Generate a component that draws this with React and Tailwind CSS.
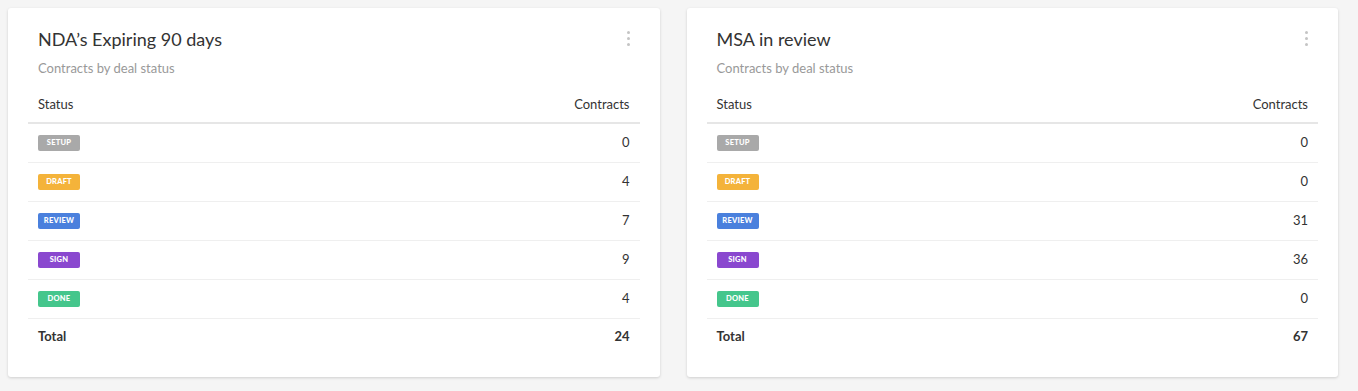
const cards = [
  {
    title: "NDA’s Expiring 90 days",
    rows: [
      ["SETUP", 0],
      ["DRAFT", 4],
      ["REVIEW", 7],
      ["SIGN", 9],
      ["DONE", 4],
    ],
    total: 24,
  },
  {
    title: "MSA in review",
    rows: [
      ["SETUP", 0],
      ["DRAFT", 0],
      ["REVIEW", 31],
      ["SIGN", 36],
      ["DONE", 0],
    ],
    total: 67,
  },
];

const BADGE = {
  SETUP: "bg-[#a9a9a9]",
  DRAFT: "bg-[#f4b33a]",
  REVIEW: "bg-[#4a80dd]",
  SIGN: "bg-[#8a48cf]",
  DONE: "bg-[#45c68c]",
};

function Badge({ label }) {
  return (
    <span
      className={`inline-flex h-4 w-[42px] items-center justify-center rounded-[2px] text-[7.5px] font-black tracking-[0.03em] text-white ${BADGE[label]}`}
    >
      {label}
    </span>
  );
}

function Kebab() {
  return (
    <div className="flex flex-col gap-[3px] pt-[4px]">
      <span className="h-[3px] w-[3px] rounded-full bg-[#c4c4c4]" />
      <span className="h-[3px] w-[3px] rounded-full bg-[#c4c4c4]" />
      <span className="h-[3px] w-[3px] rounded-full bg-[#c4c4c4]" />
    </div>
  );
}

function StatusCard({ title, rows, total }) {
  return (
    <div className="flex-1 rounded-[3px] bg-white px-5 pt-[19px] pb-[22px] shadow-[0_1px_3px_rgba(0,0,0,0.16)]">
      {/* heading */}
      <div className="flex items-start justify-between px-[10px]">
        <div>
          <h2 className="text-[18px] leading-6 text-[#333]">{title}</h2>
          <p className="mt-2 text-[13px] leading-[18px] text-[#999]">
            Contracts by deal status
          </p>
        </div>
        <Kebab />
      </div>

      {/* table */}
      <div className="mt-[7px] text-[13px] text-[#333]">
        <div className="flex h-[40px] items-end justify-between border-b-2 border-[#e6e6e6] px-[10px] pb-[8px]">
          <span>Status</span>
          <span>Contracts</span>
        </div>
        {rows.map(([label, n]) => (
          <div
            key={label}
            className="flex h-[39px] items-center justify-between border-b border-[#efefef] px-[10px]"
          >
            <Badge label={label} />
            <span>{n}</span>
          </div>
        ))}
        <div className="flex h-[36px] items-center justify-between px-[10px] font-bold">
          <span>Total</span>
          <span>{total}</span>
        </div>
      </div>
    </div>
  );
}

export default function App() {
  return (
    <div
      className="flex h-[391px] items-start gap-[27px] bg-[#f5f5f5] pt-2 pr-5 pl-2"
      style={{ fontFamily: "Lato, 'Open Sans', sans-serif" }}
    >
      {cards.map((c) => (
        <StatusCard key={c.title} {...c} />
      ))}
    </div>
  );
}
